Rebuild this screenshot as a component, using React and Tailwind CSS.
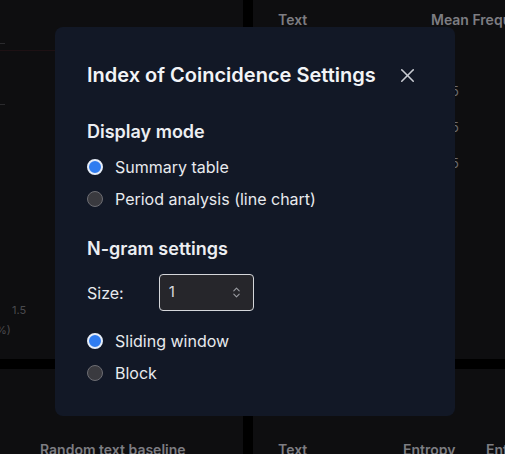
import { ChevronsUpDown, X } from 'lucide-react';

function Radio({ checked, label }) {
  return (
    <label className="flex items-center gap-[12px] h-[32px]">
      {checked ? (
        <span className="w-[16px] h-[16px] rounded-full border-2 border-[#e5ecf7] bg-[#2f7cf0] shrink-0" />
      ) : (
        <span className="w-[16px] h-[16px] rounded-full border border-[#6d6d73] bg-[#3a3a3f] shrink-0" />
      )}
      <span className="text-[16px] text-[#e8eaee]">{label}</span>
    </label>
  );
}

export default function App() {
  return (
    <div
      className="relative w-[505px] h-[454px] bg-black overflow-hidden"
      style={{ fontFamily: 'Inter, "Noto Sans", sans-serif' }}
    >
      {/* dashboard behind the dialog, already dimmed */}
      <div className="grid grid-cols-[243px_252px] grid-rows-[359px_100px] gap-x-[10px] gap-y-[10px]">
        <div className="relative bg-[#0e0e10]">
          <div className="absolute left-0 right-0 top-[50px] h-px bg-[#1e1114]" />
          <div className="absolute left-0 top-[43px] w-[5px] h-px bg-[#2a2a2d]" />
          <div className="absolute left-0 top-[104px] w-[5px] h-px bg-[#2a2a2d]" />
          <span className="absolute left-[12px] top-[302px] text-[11px] text-[#4a4a4e]">1.5</span>
          <span className="absolute left-[-4px] top-[322px] text-[11px] text-[#4a4a4e]">%)</span>
        </div>
        <div className="relative bg-[#0e0e10]">
          <span className="absolute left-[25px] top-[9px] text-[14px] font-semibold text-[#7d7d82]">Text</span>
          <span className="absolute left-[178px] top-[9px] text-[14px] font-semibold text-[#7d7d82] whitespace-nowrap">Mean Frequency</span>
          <span className="absolute left-[198px] top-[82px] text-[13px] text-[#6a6a70]">5</span>
          <span className="absolute left-[198px] top-[118px] text-[13px] text-[#6a6a70]">5</span>
          <span className="absolute left-[198px] top-[154px] text-[13px] text-[#6a6a70]">5</span>
        </div>
        <div className="relative bg-[#0e0e10]">
          <span className="absolute left-[40px] top-[70px] text-[14px] font-semibold text-[#7d7d82] whitespace-nowrap">Random text baseline</span>
        </div>
        <div className="relative bg-[#0e0e10]">
          <span className="absolute left-[25px] top-[70px] text-[14px] font-semibold text-[#7d7d82]">Text</span>
          <span className="absolute left-[150px] top-[70px] text-[14px] font-semibold text-[#7d7d82]">Entropy</span>
          <span className="absolute left-[233px] top-[70px] text-[14px] font-semibold text-[#7d7d82] whitespace-nowrap">Entropy</span>
        </div>
      </div>

      {/* dialog */}
      <div className="absolute left-[55px] top-[27px] w-[400px] h-[389px] rounded-[8px] bg-[#121826] px-[32px] pt-[33px]">
        <div className="flex items-center justify-between">
          <h2 className="text-[20px] leading-[30px] font-semibold text-[#f2f4f7]">Index of Coincidence Settings</h2>
          <button className="text-[#c9ccd2] mr-[4px]">
            <X size={23} strokeWidth={1.6} />
          </button>
        </div>

        <h3 className="mt-[29px] text-[18px] leading-[26px] font-semibold text-[#eceef2]">Display mode</h3>
        <div className="mt-[6px] flex flex-col">
          <Radio checked label="Summary table" />
          <Radio label="Period analysis (line chart)" />
        </div>

        <h3 className="mt-[21px] text-[18px] leading-[26px] font-semibold text-[#eceef2]">N-gram settings</h3>
        <div className="mt-[12px] flex items-center gap-[35px]">
          <span className="text-[16px] text-[#e8eaee]">Size:</span>
          <div className="w-[95px] h-[37px] rounded-[4px] border border-[#d4d6da] bg-[#26262b] flex items-center justify-between pl-[9px] pr-[10px]">
            <span className="text-[15px] text-[#d8dade]">1</span>
            <ChevronsUpDown size={13} className="text-[#9a9ca2]" />
          </div>
        </div>
        <div className="mt-[14px] flex flex-col">
          <Radio checked label="Sliding window" />
          <Radio label="Block" />
        </div>
      </div>
    </div>
  );
}
